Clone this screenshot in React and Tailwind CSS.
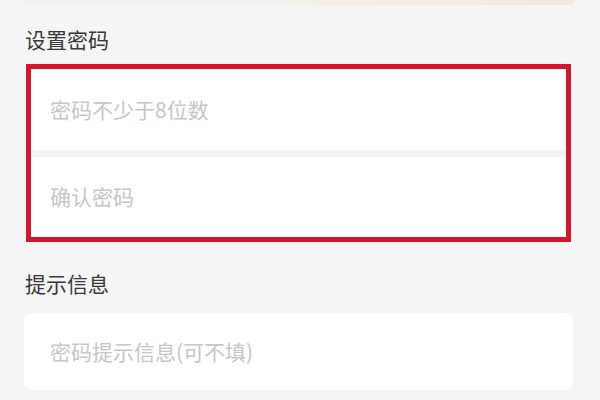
export default function App() {
  return (
    <div
      className="w-[600px] h-[400px] overflow-hidden bg-[#f5f5f5]"
      style={{ fontFamily: '"Noto Sans CJK SC", "Noto Sans", sans-serif' }}
    >
      {/* bottom edge of the card above */}
      <div className="mx-[25px] h-[5px] rounded-b-md bg-gradient-to-r from-[#f4f0ec] via-[#f4efea] to-[#f6e6df]" />

      {/* 设置密码 */}
      <div className="mt-[20px] pl-[25px] text-[21px] leading-[28px] text-[#383838]">设置密码</div>

      <div className="mt-[11px] ml-[26px] w-[545px] border-[5px] border-[#d3162c] bg-[#f4f4f4]">
        <div className="h-[81px] bg-white flex items-center pl-[19px] text-[21px] text-[#c6c6c6]">
          密码不少于8位数
        </div>
        <div className="h-[80px] mt-[7px] bg-white flex items-center pl-[19px] text-[21px] text-[#c6c6c6]">
          确认密码
        </div>
      </div>

      {/* 提示信息 */}
      <div className="mt-[27px] pl-[25px] text-[21px] leading-[28px] text-[#383838]">提示信息</div>

      <div className="mt-[16px] ml-[24px] w-[549px] h-[77px] rounded-lg bg-white flex items-center pl-[26px] text-[21px] text-[#c6c6c6]">
        密码提示信息(可不填)
      </div>
    </div>
  );
}
